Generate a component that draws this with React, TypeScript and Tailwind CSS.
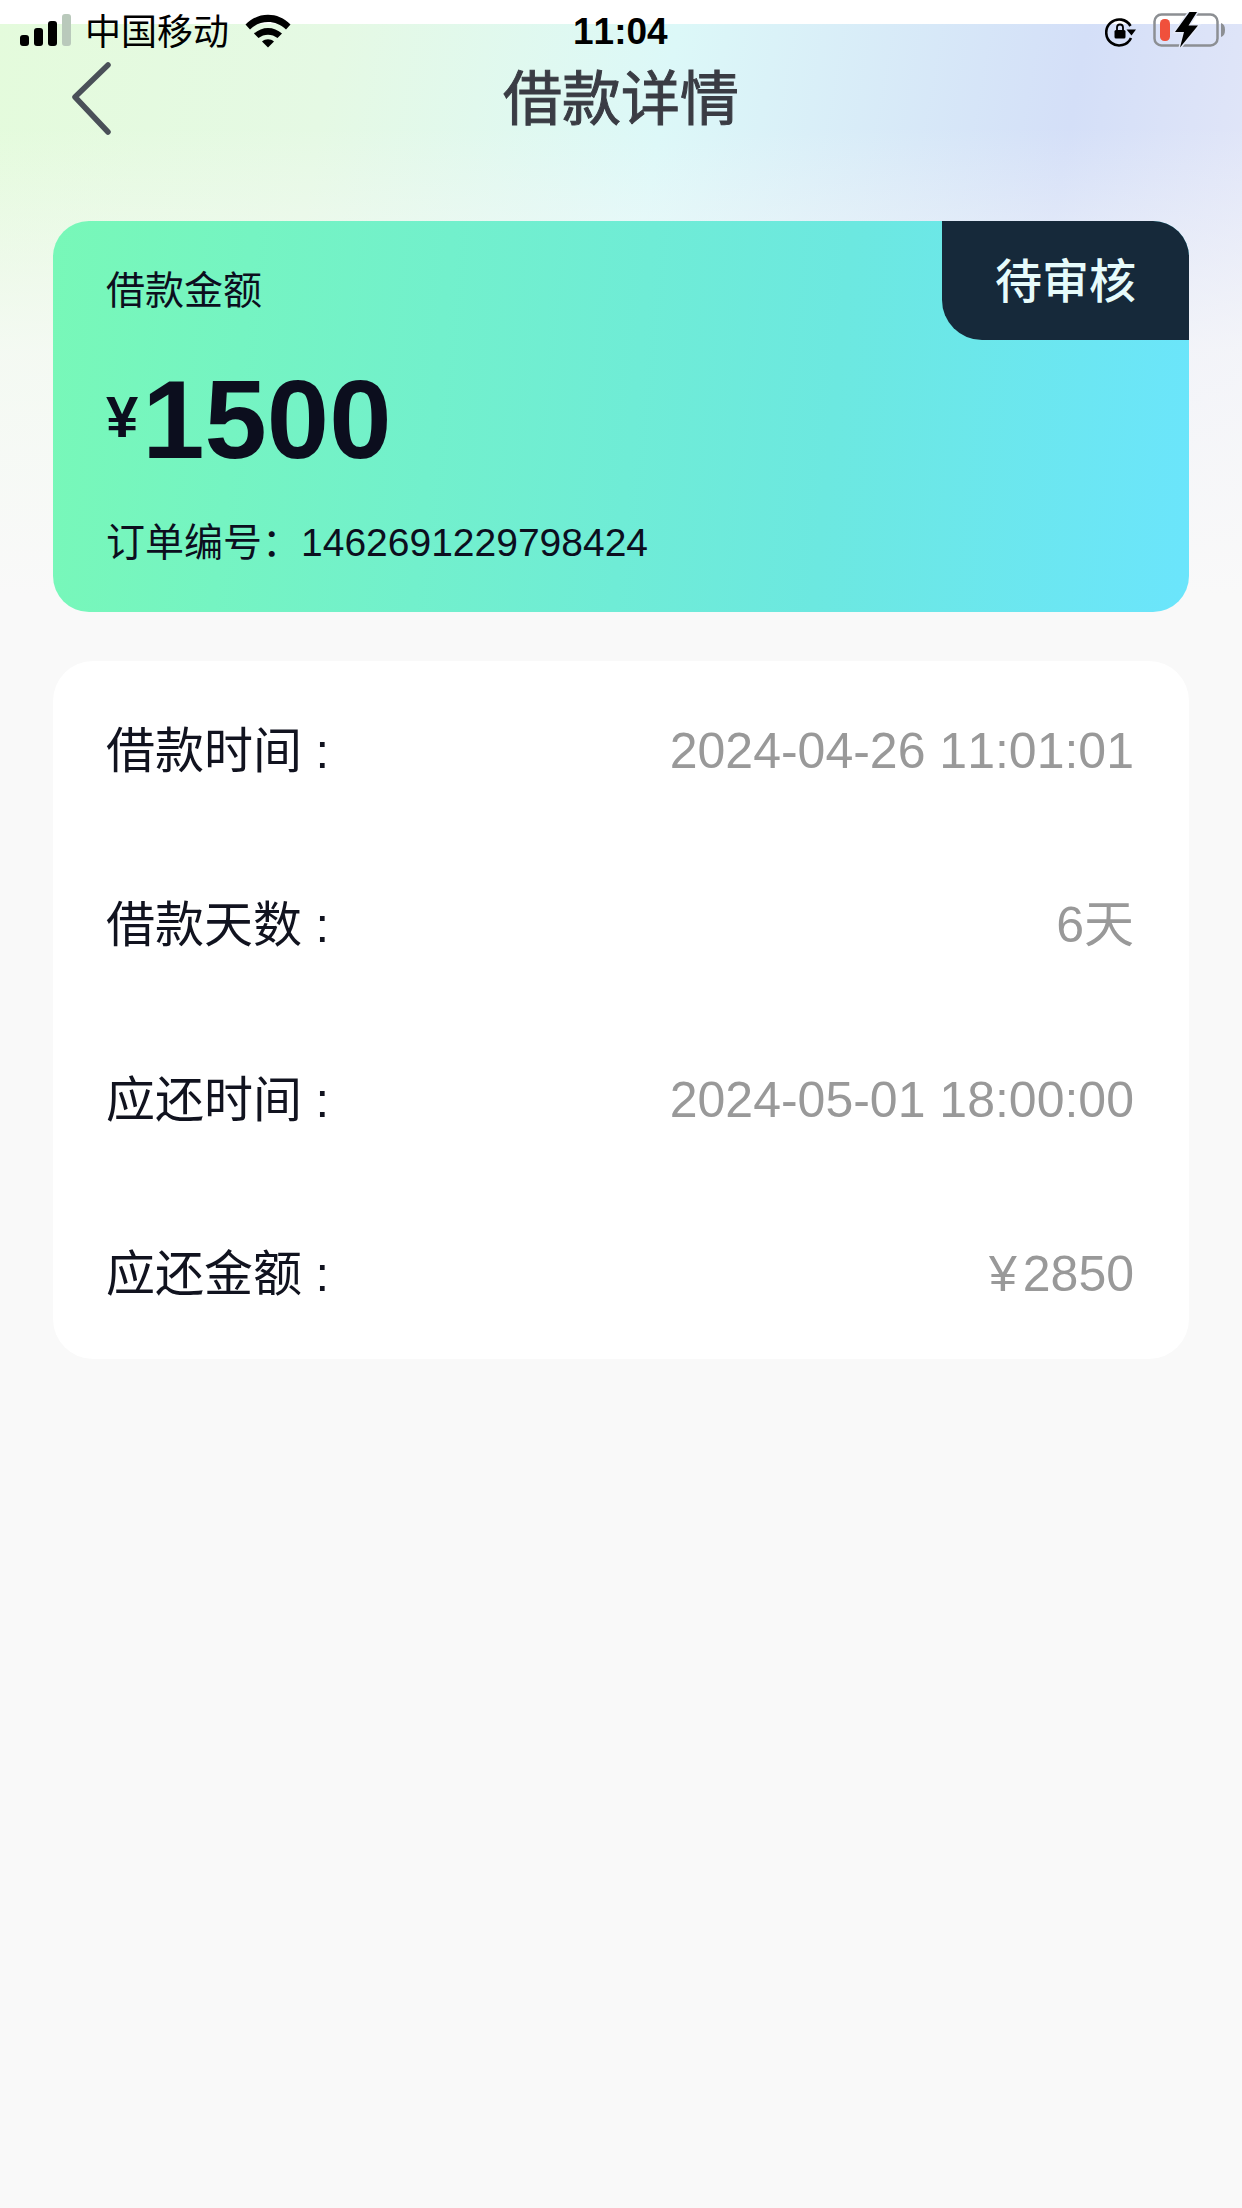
import React from 'react';

const rows = [
  { label: '借款时间 :', value: '2024-04-26 11:01:01' },
  { label: '借款天数 :', value: '6天' },
  { label: '应还时间 :', value: '2024-05-01 18:00:00' },
  { label: '应还金额 :', value: '2850', prefix: '¥' },
];

const SignalIcon = () => (
  <svg width="51" height="32" viewBox="0 0 51 32">
    <rect x="0" y="21" width="9" height="11" rx="3" fill="#000" />
    <rect x="14" y="14" width="9" height="18" rx="3" fill="#000" />
    <rect x="28" y="7" width="9" height="25" rx="3" fill="#000" />
    <rect x="42" y="0" width="9" height="32" rx="3" fill="#b9c9bb" />
  </svg>
);

const WifiIcon = () => (
  <svg width="46" height="34" viewBox="0 0 46 34">
    <path d="M0.500 10.500 C13 -2.500 33 -2.500 45.500 10.500 L41 15.500 C31 5.500 15 5.500 5 15.500 Z" fill="#000" />
    <path d="M9 19.500 C17 12 29 12 37 19.500 L32.500 24 C27 19.500 19 19.500 13.500 24 Z" fill="#000" />
    <path d="M17 27.500 C20.500 24.500 25.500 24.500 29 27.500 L23 33.500 Z" fill="#000" />
  </svg>
);

const RotationLockIcon = () => (
  <svg width="32" height="30" viewBox="0 0 32 30">
    <path d="M25.500 9 A13 13 0 1 0 26 21" fill="none" stroke="#000" strokeWidth="2.600" />
    <path d="M21.500 12.500 L31 12.500 L26.500 18.500 Z" fill="#000" />
    <rect x="9.500" y="13" width="11" height="8.500" rx="1.500" fill="#000" />
    <path d="M12 13 V10.500 A3 3 0 0 1 18 10.500 V13" fill="none" stroke="#000" strokeWidth="1.800" />
  </svg>
);

const BatteryIcon = () => (
  <svg width="74" height="36" viewBox="0 0 74 36">
    <rect x="1.500" y="2.500" width="63" height="31" rx="7" fill="none" stroke="#8c8f93" strokeWidth="2.500" />
    <path d="M68 11 C71 12 72 14.500 72 18 C72 21.500 71 24 68 25 Z" fill="#8c8f93" />
    <rect x="7" y="7" width="10" height="22" rx="4.500" fill="#f0503c" />
    <path d="M36.500 0 L22 20 H31 L27 35.500 L45 13.500 H35.500 L44 0 Z" fill="#000" stroke="#e4e9f8" strokeWidth="3" paintOrder="stroke" />
  </svg>
);

const StatusBar = () => (
  <div className="relative h-[52px] flex items-start justify-between pl-[20px] pr-[15px]">
    <div className="flex items-start pt-[14px]">
      <SignalIcon />
      <span className="ml-[14px] mt-[1px] text-[36px] leading-[36px] text-black">中国移动</span>
      <span className="ml-[16px]"><WifiIcon /></span>
    </div>
    <span className="absolute left-[573px] top-[12px] text-[37px] leading-[40px] font-bold text-black">11:04</span>
    <div className="flex items-start gap-[16px] pt-[12px]">
      <span className="mt-[5px]"><RotationLockIcon /></span>
      <BatteryIcon />
    </div>
  </div>
);

export default function App() {
  return (
    <div className="w-[1242px] min-h-[2208px] bg-[#f9f9f9] [font-kerning:none] font-['Liberation_Sans','Noto_Sans_CJK_SC',sans-serif]">
      <div className="h-[700px] bg-[linear-gradient(to_bottom,#fff_24px,transparent_24px),linear-gradient(to_bottom,rgba(249,249,249,0)_18%,rgba(249,249,249,0.75)_50%,#f9f9f9_85%),linear-gradient(100deg,#e4fbdc_0%,#e5f9e4_25%,#dcf8f8_50%,#d4dff8_80%,#e6e8f8_100%)]">
        <StatusBar />
        <div className="relative h-[96px] flex items-center justify-center">
          <svg className="absolute left-[70px] top-[9px] blur-[0.6px]" width="44" height="76" viewBox="0 0 44 76">
            <path d="M38 4 L5 36 L38 71" fill="none" stroke="#4a5058" strokeWidth="5.500" strokeLinecap="round" strokeLinejoin="round" />
          </svg>
          <h1 className="text-[59px] leading-[72px] text-[#3a3c44] [-webkit-text-stroke:1px_#3a3c44]">借款详情</h1>
        </div>
        <div className="px-[53px] mt-[73px]">
          <div className="relative h-[391px] rounded-[36px] bg-[linear-gradient(96deg,#78f8b8_0%,#6ce8e0_68%,#6be5fc_100%)] pl-[53px] text-[#0c0e1e]">
            <div className="absolute right-0 top-0 w-[247px] h-[119px] pt-[3px] bg-[#16293a] rounded-tr-[36px] rounded-bl-[40px] flex items-center justify-center text-[#e6fbfb] text-[47px] font-medium">
              待审核
            </div>
            <div className="pt-[46px] text-[39px] leading-[48px]">借款金额</div>
            <div className="flex items-baseline mt-[44px] h-[122px]">
              <span className="text-[58px] font-bold relative -top-[21px] mr-[4px] leading-none">¥</span>
              <span className="text-[112px] leading-[122px] font-bold">1500</span>
            </div>
            <div className="mt-[38px] text-[39px] leading-[48px]">订单编号：1462691229798424</div>
          </div>
        </div>
      </div>
      <div className="mx-[53px] h-[698px] -mt-[39px] bg-white rounded-[40px] relative pl-[53px] pr-[55px] pt-[3px] flex flex-col">
        {rows.map((row) => (
          <div key={row.label} className="h-[174.5px] shrink-0 flex items-center justify-between">
            <span className="text-[49px] text-[#11131f]">{row.label}</span>
            <span className="text-[50px] text-[#999]">
              {row.prefix && <span className="mr-[6px]">{row.prefix}</span>}
              {row.value}
            </span>
          </div>
        ))}
      </div>
    </div>
  );
}
